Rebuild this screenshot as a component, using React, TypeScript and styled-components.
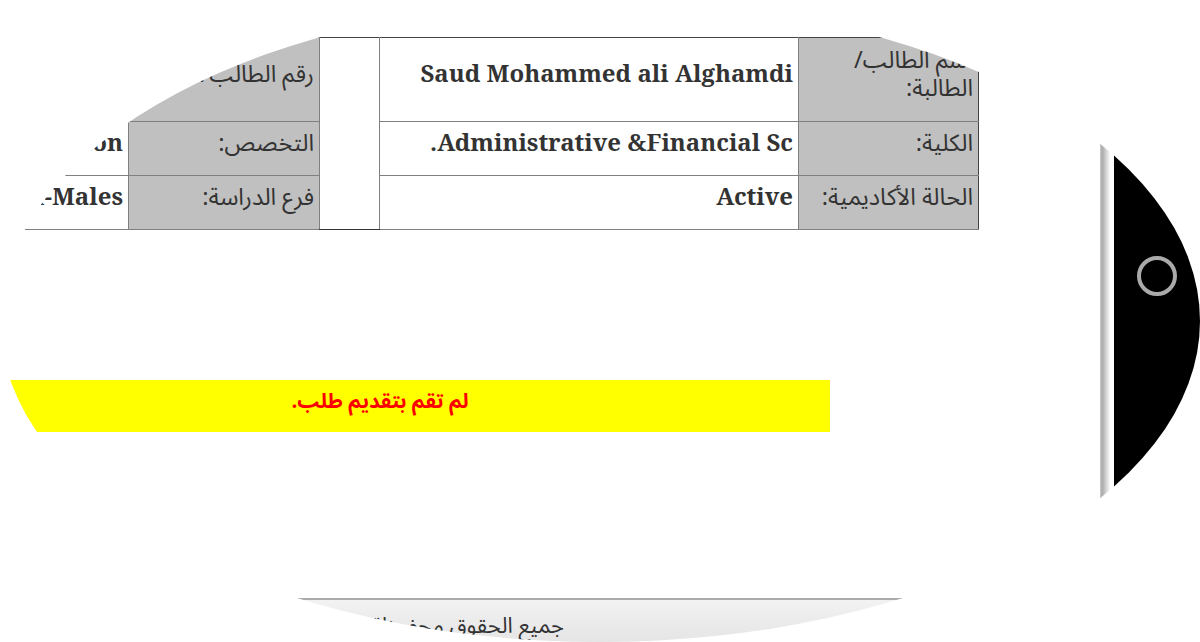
import React from "react";
import styled, { createGlobalStyle } from "styled-components";

const GlobalStyle = createGlobalStyle`
  html, body {
    margin: 0;
    padding: 0;
    background: #fff;
    overflow: hidden;
  }
`;

const Screen = styled.div`
  display: flex;
  width: 1200px;
  height: 642px;
  border-radius: 50%;
  overflow: hidden;
  background: #fff;
`;

const Main = styled.main`
  display: flex;
  flex-direction: column;
  width: 1100px;
  flex-shrink: 0;
  direction: rtl;
  overflow: hidden;
  font-family: "Noto Sans Arabic", "Noto Sans", sans-serif;
`;

const InfoTable = styled.table`
  width: 1100px;
  flex-shrink: 0;
  margin: 37px 0 0 0;
  margin-inline-start: 121px;
  border-collapse: collapse;
  table-layout: fixed;
  color: #333;

  tr:first-child td {
    border-top-color: #444;
  }

  tr td:first-child {
    border-right-color: #444;
  }
`;

const Row = styled.tr<{ $tall?: boolean }>`
  height: ${(p) => (p.$tall ? "84px" : "54px")};
`;

const LabelCell = styled.td<{ $nowrap?: boolean }>`
  border: 1px solid #808080;
  background: #c0c0c0;
  padding: 0 5px 10px;
  font-size: 23.5px;
  line-height: 28px;
  text-align: right;
  white-space: ${(p) => (p.$nowrap ? "nowrap" : "normal")};
`;

const ValueCell = styled.td`
  border: 1px solid #808080;
  background: #fff;
  padding: 0 5px 14px;
  font-family: "Noto Serif", serif;
  font-weight: 700;
  font-size: 24px;
  line-height: 28px;
  text-align: right;
  white-space: nowrap;
  overflow: hidden;
`;

const PhotoCell = styled.td`
  border: 1px solid #808080;
  border-bottom-color: #333;
  background: #fff;
`;

const Notice = styled.div`
  width: 900px;
  height: 52px;
  flex-shrink: 0;
  margin-top: 150px;
  margin-inline-start: 270px;
  background: #ff0;
  color: #f00;
  font-size: 20.5px;
  font-weight: 700;
  line-height: 44px;
  text-align: center;
`;

const Footer = styled.footer`
  flex: 1;
  margin-top: 166px;
  padding-inline-start: 536px;
  border-top: 2px solid #aaa;
  background: linear-gradient(#f2f2f2, #e2e2e2);
  color: #333;
  font-size: 22px;
  line-height: 52px;
  white-space: nowrap;
`;

const Bezel = styled.aside`
  display: flex;
  flex: 1;
`;

const BezelShadow = styled.div`
  width: 14px;
  background: linear-gradient(to right, #ccc, #aaa 15%, #fff 75%);
`;

const BezelBody = styled.div`
  display: flex;
  flex: 1;
  justify-content: center;
  padding-top: 256px;
  background: #000;
`;

const HomeButton = styled.div`
  width: 40px;
  height: 40px;
  box-sizing: border-box;
  border: 4px solid #aaa;
  border-radius: 50%;
`;

export default function App() {
  return (
    <>
      <GlobalStyle />
      <Screen>
        <Main>
          <InfoTable>
            <colgroup>
              <col style={{ width: 180 }} />
              <col style={{ width: 419 }} />
              <col style={{ width: 60 }} />
              <col style={{ width: 191 }} />
              <col />
            </colgroup>
            <tbody>
              <Row $tall>
                <LabelCell>اسم الطالب/ الطالبة:</LabelCell>
                <ValueCell>Saud Mohammed ali Alghamdi</ValueCell>
                <PhotoCell rowSpan={3} />
                <LabelCell $nowrap>رقم الطالب/الطالبة:</LabelCell>
                <ValueCell>441001234</ValueCell>
              </Row>
              <Row>
                <LabelCell>الكلية:</LabelCell>
                <ValueCell>Administrative &amp;Financial Sc.</ValueCell>
                <LabelCell>التخصص:</LabelCell>
                <ValueCell>Administration</ValueCell>
              </Row>
              <Row>
                <LabelCell>الحالة الأكاديمية:</LabelCell>
                <ValueCell>Active</ValueCell>
                <LabelCell>فرع الدراسة:</LabelCell>
                <ValueCell>Main-Males</ValueCell>
              </Row>
            </tbody>
          </InfoTable>
          <Notice>لم تقم بتقديم طلب.</Notice>
          <Footer>جميع الحقوق محفوظة لجامعة الباحة</Footer>
        </Main>
        <Bezel>
          <BezelShadow />
          <BezelBody>
            <HomeButton />
          </BezelBody>
        </Bezel>
      </Screen>
    </>
  );
}
